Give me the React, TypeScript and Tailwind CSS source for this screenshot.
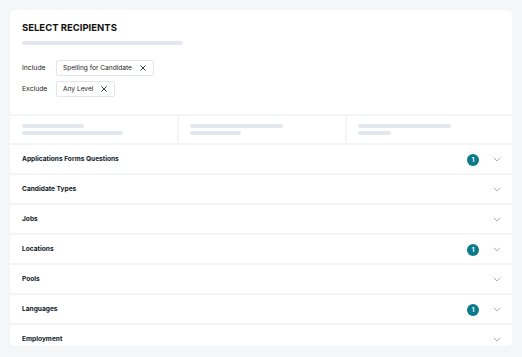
import React from "react";

const font = { fontFamily: "Inter, 'Noto Sans', sans-serif" };

function XIcon() {
  return (
    <svg width="6" height="6" viewBox="0 0 6 6" className="shrink-0">
      <path d="M0.7 0.7 L5.3 5.3 M5.3 0.7 L0.7 5.3" stroke="#1f2937" strokeWidth="0.9" strokeLinecap="round" />
    </svg>
  );
}

function Chevron() {
  return (
    <svg width="8" height="5" viewBox="0 0 8 5">
      <path d="M1 1 L4 4 L7 1" stroke="#a3a8b0" strokeWidth="0.9" fill="none" strokeLinecap="round" strokeLinejoin="round" />
    </svg>
  );
}

function Chip({ label }: { label: string }) {
  return (
    <div className="flex items-center h-[16px] pl-[6px] pr-[7px] gap-[8px] border border-[#e3e6ea] rounded-[2px] bg-white">
      <span className="text-[6.6px] text-[#222] leading-none">{label}</span>
      <XIcon />
    </div>
  );
}

const rows: { label: string; badge?: boolean }[] = [
  { label: "Applications Forms Questions", badge: true },
  { label: "Candidate Types" },
  { label: "Jobs" },
  { label: "Locations", badge: true },
  { label: "Pools" },
  { label: "Languages", badge: true },
  { label: "Employment" },
];

export default function App() {
  return (
    <div className="w-[522px] h-[357px] bg-[#f4f6f8] p-[10px]" style={font}>
      <div className="w-[502px] h-[336px] bg-white rounded-[4px] overflow-hidden shadow-[0_0_2px_rgba(0,0,0,0.04)]">
        <div className="px-[12px] pt-[11px] pb-[17px]">
          <div className="text-[9.5px] leading-[14px] font-bold text-[#111]">SELECT RECIPIENTS</div>
          <div className="mt-[6px] w-[161px] h-[4px] rounded-full bg-[#e4e7ee]" />
          <div className="mt-[15px] flex flex-col gap-[5px]">
            <div className="flex items-center">
              <span className="w-[34px] text-[6.8px] text-[#222]">Include</span>
              <Chip label="Spelling for Candidate" />
            </div>
            <div className="flex items-center">
              <span className="w-[34px] text-[6.8px] text-[#222]">Exclude</span>
              <Chip label="Any Level" />
            </div>
          </div>
        </div>
        <div className="grid grid-cols-3 h-[31px] border-t-2 border-b-2 border-[#f3f5f7]">
          <div className="pl-[12px] pt-[8px] flex flex-col gap-[3px]">
            <div className="w-[62px] h-[4px] rounded-full bg-[#e4e7ee]" />
            <div className="w-[101px] h-[4px] rounded-full bg-[#e4e7ee]" />
          </div>
          <div className="pl-[11px] pt-[8px] flex flex-col gap-[3px] border-l-2 border-[#f3f5f7]">
            <div className="w-[93px] h-[4px] rounded-full bg-[#e4e7ee]" />
            <div className="w-[51px] h-[4px] rounded-full bg-[#e4e7ee]" />
          </div>
          <div className="pl-[11px] pt-[8px] flex flex-col gap-[3px] border-l-2 border-[#f3f5f7]">
            <div className="w-[93px] h-[4px] rounded-full bg-[#e4e7ee]" />
            <div className="w-[33px] h-[4px] rounded-full bg-[#e4e7ee]" />
          </div>
        </div>
        {rows.map((r) => (
          <div key={r.label} className="h-[30px] flex items-center pl-[12px] pr-[11px] pt-[1px] border-b-2 border-[#f3f5f7]">
            <span className="flex-1 text-[6.6px] font-bold text-[#111827]">{r.label}</span>
            {r.badge && (
              <div className="w-[12px] h-[12px] rounded-full bg-[#0b7b8b] flex items-center justify-center mr-[14px]">
                <span className="text-[6px] font-bold text-white leading-none">1</span>
              </div>
            )}
            <Chevron />
          </div>
        ))}
      </div>
    </div>
  );
}
